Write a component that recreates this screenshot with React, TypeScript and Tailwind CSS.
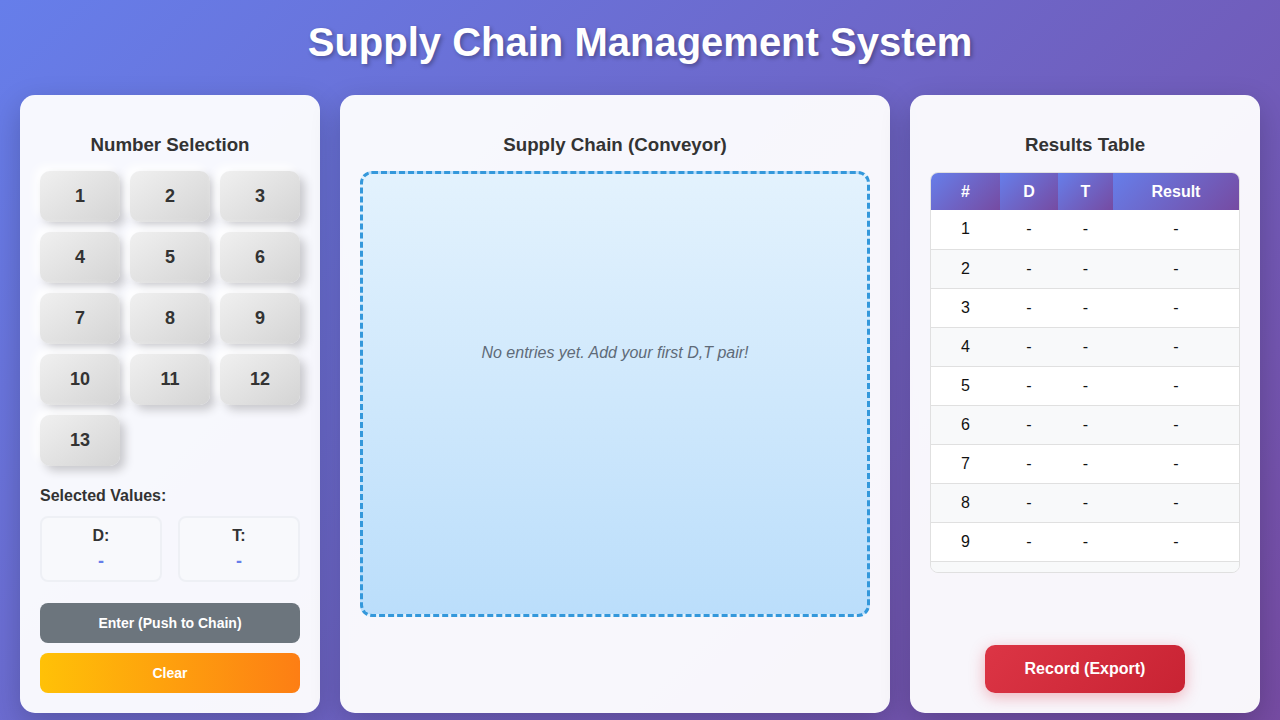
import React from 'react';

const numbers = Array.from({ length: 13 }, (_, i) => i + 1);
const rows = Array.from({ length: 10 }, (_, i) => i + 1);

const thClass =
  'h-[37px] bg-[linear-gradient(135deg,#667eea_0%,#764ba2_100%)] text-white font-bold text-[16px] text-center';

export default function App() {
  return (
    <div
      className="min-h-[720px] bg-[linear-gradient(135deg,#667eea_0%,#764ba2_100%)] px-5 pt-[18px] pb-5"
      style={{ fontFamily: '"Liberation Sans", Arial, sans-serif' }}
    >
      <h1 className="text-center text-white font-bold text-[40px] leading-[48px] mb-[29px] [text-shadow:2px_2px_4px_rgba(0,0,0,0.3)]">
        Supply Chain Management System
      </h1>

      <div className="flex gap-5">
        {/* Number Selection */}
        <div className="w-[300px] h-[618px] shrink-0 rounded-[15px] bg-white/95 p-5 shadow-[0_10px_30px_rgba(0,0,0,0.2)] flex flex-col">
          <h3 className="text-center font-bold text-[18.72px] leading-[21px] text-[#333] mt-[19px] mb-[16px]">
            Number Selection
          </h3>
          <div className="grid grid-cols-3 gap-[10px]">
            {numbers.map((n) => (
              <button
                key={n}
                className="h-[51px] rounded-[10px] bg-[linear-gradient(145deg,#f0f0f0,#d4d4d4)] text-[18px] font-bold text-[#333] shadow-[5px_5px_10px_#c8c8cc,-5px_-5px_10px_#ffffff]"
              >
                {n}
              </button>
            ))}
          </div>

          <h4 className="mt-[21px] text-[16px] leading-[18px] font-bold text-[#333]">Selected Values:</h4>
          <div className="mt-[11px] flex gap-4">
            {['D:', 'T:'].map((label) => (
              <div
                key={label}
                className="flex-1 h-[66px] rounded-lg border-2 border-[#eef0f5] bg-[#f8f9fc] flex flex-col items-center pt-[9px]"
              >
                <span className="text-[16px] leading-[18px] font-bold text-[#333]">{label}</span>
                <span className="mt-[5px] text-[18px] leading-[22px] font-bold text-[#667eea]">-</span>
              </div>
            ))}
          </div>

          <button className="mt-[21px] h-10 rounded-lg bg-[#6c757d] text-white font-bold text-[14px]">
            Enter (Push to Chain)
          </button>
          <button className="mt-[10px] h-10 rounded-lg bg-[linear-gradient(90deg,#ffc107,#fd7e14)] text-white font-bold text-[14px]">
            Clear
          </button>
        </div>

        {/* Conveyor */}
        <div className="w-[550px] h-[618px] shrink-0 rounded-[15px] bg-white/95 p-5 shadow-[0_10px_30px_rgba(0,0,0,0.2)] flex flex-col">
          <h3 className="text-center font-bold text-[18.72px] leading-[21px] text-[#333] mt-[19px] mb-[16px]">
            Supply Chain (Conveyor)
          </h3>
          <div className="h-[446px] rounded-xl border-[3px] border-dashed border-[#3498db] bg-[linear-gradient(180deg,#e3f2fd,#bbdefb)] pt-[170px]">
            <p className="text-center italic text-[16px] leading-[18px] text-[#5f6b78]">
              No entries yet. Add your first D,T pair!
            </p>
          </div>
        </div>

        {/* Results */}
        <div className="w-[350px] h-[618px] shrink-0 rounded-[15px] bg-white/95 p-5 shadow-[0_10px_30px_rgba(0,0,0,0.2)] flex flex-col">
          <h3 className="text-center font-bold text-[18.72px] leading-[21px] text-[#333] mt-[19px] mb-[17px]">
            Results Table
          </h3>
          <div className="h-[401px] overflow-hidden rounded-lg border border-[#e0e0e0] bg-[#f8f9fa]">
            <table className="w-full border-collapse table-fixed">
              <colgroup>
                <col className="w-[69px]" />
                <col className="w-[58px]" />
                <col className="w-[55px]" />
                <col />
              </colgroup>
              <thead>
                <tr>
                  <th className={thClass}>#</th>
                  <th className={thClass}>D</th>
                  <th className={thClass}>T</th>
                  <th className={thClass}>Result</th>
                </tr>
              </thead>
              <tbody>
                {rows.map((r) => (
                  <tr
                    key={r}
                    className={`h-[39px] border-b border-[#e0e0e0] text-[16px] text-[#111] ${
                      r % 2 === 0 ? 'bg-[#f8f9fa]' : 'bg-white'
                    }`}
                  >
                    <td className="text-center">{r}</td>
                    <td className="text-center">-</td>
                    <td className="text-center">-</td>
                    <td className="text-center">-</td>
                  </tr>
                ))}
              </tbody>
            </table>
          </div>
          <button className="mt-auto self-center w-[200px] h-12 rounded-[10px] bg-[linear-gradient(135deg,#dc3545,#c82333)] text-white font-bold text-[16px] shadow-[0_4px_15px_rgba(220,53,69,0.35)]">
            Record (Export)
          </button>
        </div>
      </div>
    </div>
  );
}
